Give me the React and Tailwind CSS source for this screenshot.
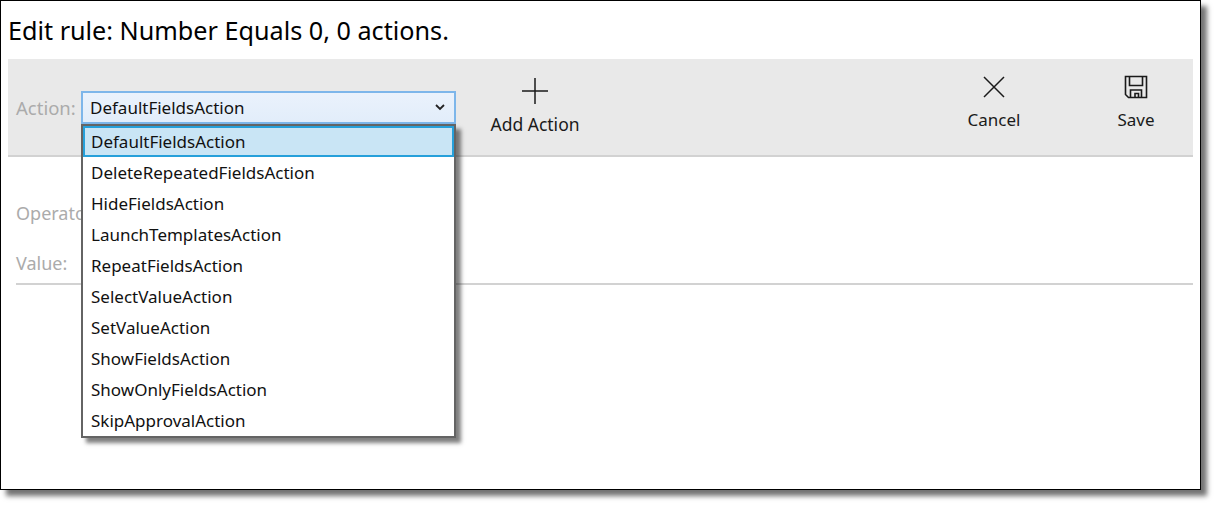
import { useState } from 'react';

const ACTIONS = [
  'DefaultFieldsAction',
  'DeleteRepeatedFieldsAction',
  'HideFieldsAction',
  'LaunchTemplatesAction',
  'RepeatFieldsAction',
  'SelectValueAction',
  'SetValueAction',
  'ShowFieldsAction',
  'ShowOnlyFieldsAction',
  'SkipApprovalAction',
];

const FONT = "font-['Noto_Sans','Open_Sans',sans-serif]";

function PlusIcon() {
  return (
    <svg width="28" height="28" viewBox="0 0 28 28" fill="none" stroke="#1a1a1a" strokeWidth="1.5">
      <path d="M14 1v26M1 14h26" />
    </svg>
  );
}

function CloseIcon() {
  return (
    <svg width="24" height="24" viewBox="0 0 24 24" fill="none" stroke="#1a1a1a" strokeWidth="1.5">
      <path d="M2 2l20 20M22 2L2 22" />
    </svg>
  );
}

function SaveIcon() {
  return (
    <svg width="24" height="24" viewBox="0 0 24 24" fill="none" stroke="#1a1a1a" strokeWidth="1.6">
      <path d="M1.5 1.5h21v21H4.5l-3-3z" />
      <path d="M5.5 1.5v9h13v-9" />
      <path d="M6.5 22.5v-7.5h11v7.5" />
      <path d="M11 22.5v-4h3.5v4" />
    </svg>
  );
}

function ToolButton({ icon, label, className, labelClass = 'text-[17px]' }) {
  return (
    <button className={`flex w-[100px] flex-col items-center text-[#1a1a1a] ${className}`}>
      {icon}
      <span className={`leading-[24px] ${labelClass}`}>{label}</span>
    </button>
  );
}

export default function App() {
  const [selected] = useState(ACTIONS[0]);

  return (
    <div className={`h-[505px] w-[1216px] bg-white ${FONT}`}>
      <div className="relative flex h-[490px] w-[1201px] flex-col border border-black bg-white px-[7px] shadow-[6px_6px_5px_rgba(0,0,0,0.55)]">
        <h1 className="h-[58px] pt-[12px] text-[25.2px] leading-[34px] text-black">Edit rule: Number Equals 0, 0 actions.</h1>

        {/* Toolbar */}
        <div className="flex h-[98px] w-[1185px] items-start border-b-2 border-[#d2d2d2] bg-[#e9e9e9] pl-2 pr-[7px]">
          <span className="mt-[36px] w-[65px] text-[18.5px] leading-[26px] text-[#ababab]">Action:</span>
          <div className="relative mt-[32px] h-[33px] w-[375px]">
            <div className="flex h-full items-center justify-between border-2 border-[#7db6ea] bg-gradient-to-b from-[#eaf2fc] to-[#e2edfa] pl-[7px] pr-[9px] text-[17px] text-[#111]">
              <span>{selected}</span>
              <svg width="10" height="7" viewBox="0 0 10 7" fill="none" stroke="#222" strokeWidth="1.8">
                <path d="M1 1l4 4 4-4" />
              </svg>
            </div>

            {/* Open dropdown list */}
            <ul className="absolute left-0 top-[33px] z-10 h-[314px] w-[375px] border-2 border-[#646464] bg-white text-[17px] text-[#111] shadow-[5px_5px_4px_rgba(0,0,0,0.5)]">
              {ACTIONS.map((name) => (
                <li
                  key={name}
                  className={
                    name === selected
                      ? 'flex h-[31px] items-center border-2 border-[#26a0da] bg-[#c9e5f5] pl-[6px]'
                      : 'flex h-[31px] items-center pl-[8px]'
                  }
                >
                  {name}
                </li>
              ))}
            </ul>
          </div>
          <ToolButton icon={<PlusIcon />} label="Add Action" labelClass="text-[17.5px]" className="ml-[29px] mt-[18px] gap-[7px]" />
          <ToolButton icon={<CloseIcon />} label="Cancel" className="ml-auto mt-[16px] gap-[9px]" />
          <ToolButton icon={<SaveIcon />} label="Save" className="ml-[42px] mt-[16px] gap-[9px]" />
        </div>

        {/* Rule fields, mostly hidden by the list */}
        <div className="flex w-[1185px] flex-col pl-2">
          <span className="mt-[43px] text-[18px] leading-[26px] text-[#ababab]">Operator:</span>
          <span className="mt-[24px] text-[18px] leading-[26px] text-[#ababab]">Value:</span>
          <div className="mt-[7px] h-[2px] bg-[#d2d2d2]" />
        </div>
      </div>
    </div>
  );
}
